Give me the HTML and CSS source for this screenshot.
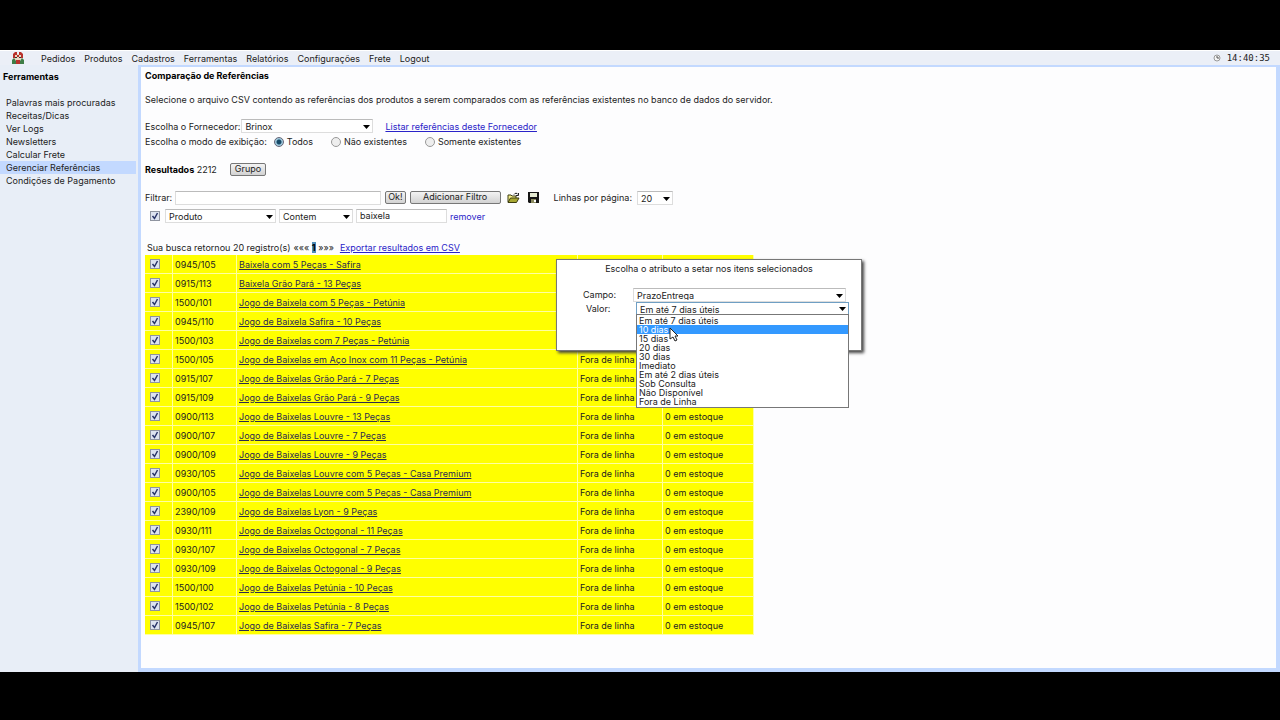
FILE: index.html
```html
<!DOCTYPE html>
<html lang="pt-BR">
<head>
  <meta charset="UTF-8">
  <title>Comparação de Referências</title>
  <link rel="stylesheet" href="styles.css">
</head>
<body>

<div class="app">
  <header class="topbar">
    <svg class="logo" viewBox="0 0 12 12" width="12" height="12">
      <path fill="#e9d9c4" d="M2 2h8v6H2z"/>
      <path fill="#b8322c" d="M1 2l2-2h2v3H3v3H1zM11 2L9 0H7v3h2v3h2zM5 3h2v2H5zM4 8h4v4H4z"/>
      <path fill="#3f7d46" d="M0 8l2-2 2 3v3H0zM12 8l-2-2-2 3v3h4z"/>
      <path fill="#333" d="M3 5h2v1H3zM7 5h2v1H7z"/>
    </svg>
    <nav class="menu">
      <a href="#">Pedidos</a>
      <a href="#">Produtos</a>
      <a href="#">Cadastros</a>
      <a href="#">Ferramentas</a>
      <a href="#">Relatórios</a>
      <a href="#">Configurações</a>
      <a href="#">Frete</a>
      <a href="#">Logout</a>
    </nav>
    <div class="clock">
      <svg viewBox="0 0 8 8" width="8" height="8"><circle cx="4" cy="4" r="3" fill="#f5f5f5" stroke="#999"/><path d="M4 2v2h2" fill="none" stroke="#555"/></svg>
      <span>14:40:35</span>
    </div>
  </header>

  <div class="columns">
    <aside class="sidebar">
      <h2>Ferramentas</h2>
      <a href="#">Palavras mais procuradas</a>
      <a href="#">Receitas/Dicas</a>
      <a href="#">Ver Logs</a>
      <a href="#">Newsletters</a>
      <a href="#">Calcular Frete</a>
      <a href="#" class="active">Gerenciar Referências</a>
      <a href="#">Condições de Pagamento</a>
    </aside>

    <main class="content">
      <h1>Comparação de Referências</h1>
      <p class="intro">Selecione o arquivo CSV contendo as referências dos produtos a serem comparados com as referências existentes no banco de dados do servidor.</p>

      <div class="row supplier">
        <label for="fornecedor">Escolha o Fornecedor:</label>
        <select id="fornecedor" class="w-supplier"><option>Brinox</option></select>
        <a href="#" class="link">Listar referências deste Fornecedor</a>
      </div>

      <div class="row modes">
        <span class="modes-label">Escolha o modo de exibição:</span>
        <input type="radio" name="modo" id="todos" checked><label for="todos">Todos</label>
        <input type="radio" name="modo" id="nao"><label for="nao">Não existentes</label>
        <input type="radio" name="modo" id="somente"><label for="somente">Somente existentes</label>
      </div>

      <div class="row results">
        <span><b>Resultados</b> 2212</span>
        <button type="button">Grupo</button>
      </div>

      <div class="row filter">
        <label for="filtrar">Filtrar:</label>
        <input type="text" id="filtrar" class="w-filter">
        <button type="button" class="ok">Ok!</button>
        <button type="button" class="add">Adicionar Filtro</button>
        <button type="button" class="icon" aria-label="Abrir filtro">
          <svg viewBox="0 0 13 12" width="13" height="12">
            <path d="M1 10V3h3l1 1h4v2" fill="#f4ef8a" stroke="#3c3c10"/>
            <path d="M1 10.500L3.500 6H12L9.500 10.500z" fill="#a8a832" stroke="#3c3c10"/>
            <path d="M7 2.500C8 .8 10 .8 11 2.500M11.500 1v2.500H9" fill="none" stroke="#222"/>
          </svg>
        </button>
        <button type="button" class="icon" aria-label="Salvar filtro">
          <svg viewBox="0 0 11 11" width="11" height="11">
            <path d="M0 0h11v11H1L0 10z" fill="#151515"/>
            <path d="M2 1h7v4H2z" fill="#e6ebd2"/>
            <path d="M3 7h5v4H3z" fill="#8c8c60"/>
            <path d="M6 8h2v2H6z" fill="#fff"/>
          </svg>
        </button>
        <label for="linhas" class="lines-label">Linhas por página:</label>
        <select id="linhas" class="w-lines"><option>20</option></select>
      </div>

      <div class="row criteria">
        <input type="checkbox" checked aria-label="Ativar filtro">
        <select class="w-field" aria-label="Campo do filtro"><option>Produto</option></select>
        <select class="w-op" aria-label="Operador"><option>Contem</option></select>
        <input type="text" class="w-value" value="baixela" aria-label="Valor do filtro">
        <a href="#" class="remove">remover</a>
      </div>

      <div class="row summary">
        <span>Sua busca retornou 20 registro(s)</span>
        <span class="pager">««« <b>1</b> »»»</span>
        <a href="#" class="link">Exportar resultados em CSV</a>
      </div>

      <table class="grid">
        <colgroup>
          <col class="c-check"><col class="c-ref"><col class="c-name"><col class="c-term"><col class="c-stock">
        </colgroup>
        <tbody>
          <tr><td><input type="checkbox" checked aria-label="0945/105"></td><td>0945/105</td><td><a href="#">Baixela com 5 Peças - Safira</a></td><td>Fora de linha</td><td>0 em estoque</td></tr>
          <tr><td><input type="checkbox" checked aria-label="0915/113"></td><td>0915/113</td><td><a href="#">Baixela Grão Pará - 13 Peças</a></td><td>Fora de linha</td><td>0 em estoque</td></tr>
          <tr><td><input type="checkbox" checked aria-label="1500/101"></td><td>1500/101</td><td><a href="#">Jogo de Baixela com 5 Peças - Petúnia</a></td><td>Fora de linha</td><td>0 em estoque</td></tr>
          <tr><td><input type="checkbox" checked aria-label="0945/110"></td><td>0945/110</td><td><a href="#">Jogo de Baixela Safira - 10 Peças</a></td><td>Fora de linha</td><td>0 em estoque</td></tr>
          <tr><td><input type="checkbox" checked aria-label="1500/103"></td><td>1500/103</td><td><a href="#">Jogo de Baixelas com 7 Peças - Petúnia</a></td><td>Fora de linha</td><td>0 em estoque</td></tr>
          <tr><td><input type="checkbox" checked aria-label="1500/105"></td><td>1500/105</td><td><a href="#">Jogo de Baixelas em Aço Inox com 11 Peças - Petúnia</a></td><td>Fora de linha</td><td>0 em estoque</td></tr>
          <tr><td><input type="checkbox" checked aria-label="0915/107"></td><td>0915/107</td><td><a href="#">Jogo de Baixelas Grão Pará - 7 Peças</a></td><td>Fora de linha</td><td>0 em estoque</td></tr>
          <tr><td><input type="checkbox" checked aria-label="0915/109"></td><td>0915/109</td><td><a href="#">Jogo de Baixelas Grão Pará - 9 Peças</a></td><td>Fora de linha</td><td>0 em estoque</td></tr>
          <tr><td><input type="checkbox" checked aria-label="0900/113"></td><td>0900/113</td><td><a href="#">Jogo de Baixelas Louvre - 13 Peças</a></td><td>Fora de linha</td><td>0 em estoque</td></tr>
          <tr><td><input type="checkbox" checked aria-label="0900/107"></td><td>0900/107</td><td><a href="#">Jogo de Baixelas Louvre - 7 Peças</a></td><td>Fora de linha</td><td>0 em estoque</td></tr>
          <tr><td><input type="checkbox" checked aria-label="0900/109"></td><td>0900/109</td><td><a href="#">Jogo de Baixelas Louvre - 9 Peças</a></td><td>Fora de linha</td><td>0 em estoque</td></tr>
          <tr><td><input type="checkbox" checked aria-label="0930/105"></td><td>0930/105</td><td><a href="#">Jogo de Baixelas Louvre com 5 Peças - Casa Premium</a></td><td>Fora de linha</td><td>0 em estoque</td></tr>
          <tr><td><input type="checkbox" checked aria-label="0900/105"></td><td>0900/105</td><td><a href="#">Jogo de Baixelas Louvre com 5 Peças - Casa Premium</a></td><td>Fora de linha</td><td>0 em estoque</td></tr>
          <tr><td><input type="checkbox" checked aria-label="2390/109"></td><td>2390/109</td><td><a href="#">Jogo de Baixelas Lyon - 9 Peças</a></td><td>Fora de linha</td><td>0 em estoque</td></tr>
          <tr><td><input type="checkbox" checked aria-label="0930/111"></td><td>0930/111</td><td><a href="#">Jogo de Baixelas Octogonal - 11 Peças</a></td><td>Fora de linha</td><td>0 em estoque</td></tr>
          <tr><td><input type="checkbox" checked aria-label="0930/107"></td><td>0930/107</td><td><a href="#">Jogo de Baixelas Octogonal - 7 Peças</a></td><td>Fora de linha</td><td>0 em estoque</td></tr>
          <tr><td><input type="checkbox" checked aria-label="0930/109"></td><td>0930/109</td><td><a href="#">Jogo de Baixelas Octogonal - 9 Peças</a></td><td>Fora de linha</td><td>0 em estoque</td></tr>
          <tr><td><input type="checkbox" checked aria-label="1500/100"></td><td>1500/100</td><td><a href="#">Jogo de Baixelas Petúnia - 10 Peças</a></td><td>Fora de linha</td><td>0 em estoque</td></tr>
          <tr><td><input type="checkbox" checked aria-label="1500/102"></td><td>1500/102</td><td><a href="#">Jogo de Baixelas Petúnia - 8 Peças</a></td><td>Fora de linha</td><td>0 em estoque</td></tr>
          <tr><td><input type="checkbox" checked aria-label="0945/107"></td><td>0945/107</td><td><a href="#">Jogo de Baixelas Safira - 7 Peças</a></td><td>Fora de linha</td><td>0 em estoque</td></tr>
        </tbody>
      </table>

      <!-- Group edit dialog -->
      <div class="dialog" role="dialog" aria-labelledby="dialog-title">
        <p id="dialog-title">Escolha o atributo a setar nos itens selecionados</p>
        <div class="field">
          <label for="campo">Campo:</label>
          <select id="campo"><option>PrazoEntrega</option></select>
        </div>
        <div class="field open">
          <label for="valor">Valor:</label>
          <select id="valor"><option>Em até 7 dias úteis</option></select>
          <ul class="options" role="listbox">
            <li role="option">Em até 7 dias úteis</li>
            <li role="option" class="hover">10 dias</li>
            <li role="option">15 dias</li>
            <li role="option">20 dias</li>
            <li role="option">30 dias</li>
            <li role="option">Imediato</li>
            <li role="option">Em até 2 dias úteis</li>
            <li role="option">Sob Consulta</li>
            <li role="option">Não Disponível</li>
            <li role="option">Fora de Linha</li>
          </ul>
          <svg class="cursor" viewBox="0 0 10 16" width="10" height="16"><path d="M1 1v11l3-2 2 4 2-1-2-4h3z" fill="#fff" stroke="#222"/></svg>
        </div>
      </div>
    </main>
  </div>
</div>

</body>
</html>
```
FILE: styles.css
```css
* {
  box-sizing: border-box;
}

body {
  margin: 0;
  min-height: 100vh;
  padding: 50px 0 48px;
  background: #000;
  display: flex;
  flex-direction: column;
  font-family: Inter, Verdana, sans-serif;
  font-size: 9px;
  line-height: 13px;
  color: #222;
}

.app {
  flex: 1;
  display: flex;
  flex-direction: column;
  background: #e8eef7;
}

a {
  color: inherit;
  text-decoration: none;
}

h1, h2, b {
  font-size: 9px;
  font-weight: bold;
  color: #000;
}

/* top bar */
.topbar {
  display: flex;
  align-items: center;
  height: 15px;
  padding: 0 10px 0 12px;
  border-top: 1px solid #fff;
  background: #ebeff7;
}

.menu {
  display: flex;
  gap: 9px;
  margin-left: 17px;
}

.clock {
  display: flex;
  align-items: center;
  gap: 6px;
  margin-left: auto;
  font-family: "DejaVu Sans Mono", monospace;
}

/* sidebar */
.columns {
  flex: 1;
  display: flex;
}

.sidebar {
  width: 138px;
  display: flex;
  flex-direction: column;
}

.sidebar h2 {
  margin: 5px 0 13px;
  padding-left: 3px;
}

.sidebar a {
  padding-left: 6px;
  margin-right: 2px;
}

.sidebar .active {
  background: #c3d9ff;
}

/* content */
.content {
  position: relative;
  flex: 1;
  padding: 0 4px;
  border: solid #c3d9ff;
  border-width: 2px 4px 4px 3px;
  background: #fdfdfe;
}

h1 {
  margin: 0;
  line-height: 18px;
}

.intro {
  margin: 0;
  line-height: 30px;
}

.row {
  display: flex;
  align-items: center;
}

.link {
  color: #2a23c8;
  text-decoration: underline;
}

input, select, button {
  margin: 0;
  font: inherit;
  color: #222;
}

input[type="text"], select {
  height: 14px;
  padding: 0 3px 1px;
  border: 1px solid #ddd;
  border-top-color: #bbb;
  border-radius: 0;
  background-color: #fff;
}

select {
  appearance: none;
  background-image: url("data:image/svg+xml,%3Csvg xmlns='http://www.w3.org/2000/svg' width='7' height='4'%3E%3Cpath d='M0 0h7L3.500 4z'/%3E%3C/svg%3E");
  background-repeat: no-repeat;
  background-position: right 2px bottom 3px;
}

button {
  height: 13px;
  padding: 0 4px 1px;
  line-height: 10px;
  border: 1px solid #777;
  border-radius: 2px;
  background: linear-gradient(#f3f3f3, #d2d2d2);
}

input[type="checkbox"] {
  appearance: none;
  display: block;
  width: 10px;
  height: 10px;
  border: 1px solid #8f94a0;
  background: #dde3f0 url("data:image/svg+xml,%3Csvg xmlns='http://www.w3.org/2000/svg' width='8' height='8'%3E%3Cpath d='M1.500 4L3.500 6.500L6.500 1' fill='none' stroke='%23283468' stroke-width='1.500'/%3E%3C/svg%3E") center no-repeat;
}

input[type="radio"] {
  appearance: none;
  width: 10px;
  height: 10px;
  border: 1px solid #999;
  border-radius: 50%;
  background: #eee;
}

input[type="radio"]:checked {
  border-color: #667;
  background: radial-gradient(circle, #164a68 0 2px, #9fc8dc 3px);
}

.supplier {
  height: 16px;
  margin-top: 3px;
}

.w-supplier {
  width: 132px;
  margin: 0 12px 0 1px;
}

.modes {
  height: 15px;
}

.modes-label {
  margin-right: 7px;
}

.modes label {
  margin: 0 18px 0 3px;
}

.results {
  height: 18px;
  margin-top: 11px;
  gap: 13px;
}

.filter {
  height: 19px;
  margin-top: 10px;
}

.w-filter {
  width: 206px;
  margin: 0 4px 0 3px;
}

.ok {
  padding: 0 2px 1px;
  margin-right: 4px;
}

.add {
  width: 91px;
  margin-right: 6px;
}

.icon {
  display: flex;
  align-items: center;
  margin-right: 8px;
  padding: 0;
  border: none;
  background: none;
}

.lines-label {
  margin: 0 5px 0 7px;
}

.w-lines {
  width: 36px;
}

.criteria {
  height: 18px;
  padding-left: 5px;
}

.w-field {
  width: 111px;
  margin: 0 3px 0 5px;
}

.w-op {
  width: 74px;
  margin-right: 3px;
}

.w-value {
  width: 91px;
  margin-right: 3px;
}

.remove {
  color: #2a23c8;
}

.summary {
  height: 15px;
  margin-top: 15px;
  padding-left: 2px;
}

.pager {
  margin: 0 6px 0 3px;
}

.pager b {
  background: #4f8db8;
}

/* results table */
.grid {
  width: 609px;
  table-layout: fixed;
  border-collapse: separate;
  border-spacing: 0;
}

.c-check { width: 28px; }
.c-ref { width: 64px; }
.c-name { width: 341px; }
.c-term { width: 85px; }
.c-stock { width: 91px; }

.grid td {
  height: 19px;
  padding: 0 2px;
  background: #ff0;
  border-right: 1px solid #ffffa0;
  border-bottom: 1px solid #ffffa0;
}

.grid td:first-child {
  padding-left: 5px;
}

.grid a {
  color: #2b2b50;
  text-decoration: underline;
}

/* dialog */
.dialog {
  position: absolute;
  top: 192px;
  left: 415px;
  width: 306px;
  height: 92px;
  background: #fff;
  border: 1px solid #777;
  box-shadow: 2px 2px 3px #444;
}

.dialog p {
  margin: 2px 0 13px;
  text-align: center;
}

.field {
  display: grid;
  grid-template-columns: 50px 213px;
  padding-left: 26px;
}

.field label {
  line-height: 14px;
}

.open {
  position: relative;
  padding-left: 29px;
}

.open select {
  height: 13px;
  border-color: #6f9fc4;
}

.options {
  position: absolute;
  top: 12px;
  left: 79px;
  width: 213px;
  margin: 0;
  padding: 1px 0;
  list-style: none;
  line-height: 9px;
  background: #fff;
  border: 1px solid #777;
}

.options li {
  padding-left: 2px;
}

.options .hover {
  background: #3399ff;
  color: #fff;
}

.cursor {
  position: absolute;
  top: 25px;
  left: 112px;
}
```
